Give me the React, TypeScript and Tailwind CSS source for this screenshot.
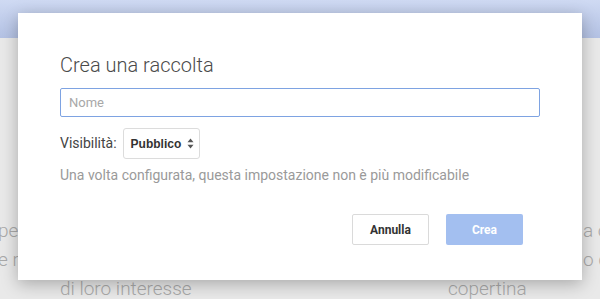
import React from "react";

export default function App() {
  return (
    <div
      className="relative w-[600px] h-[299px] overflow-hidden bg-[#e9e9e9]"
      style={{ fontFamily: "Roboto, 'Liberation Sans', sans-serif" }}
    >
      {/* page behind */}
      <div className="h-[38px] bg-gradient-to-b from-[#cfdaf3] to-[#b4c2e4]" />
      <div className="flex pt-[178px] text-[19px] leading-[29px] font-light text-[#a9a9a9] whitespace-nowrap">
        <div className="w-[448px] shrink-0 flex flex-col">
          <div className="-ml-[2px]">per condividere</div>
          <div className="-ml-[2px]">e raccolte</div>
          <div className="ml-[60px]">di loro interesse</div>
        </div>
        <div className="shrink-0 flex flex-col">
          <div className="ml-[135px]">a copertina</div>
          <div className="ml-[135px]">o di</div>
          <div>copertina</div>
        </div>
      </div>

      {/* dialog */}
      <div className="absolute left-[18px] top-[13px] w-[564px] h-[267px] bg-white shadow-[0_4px_16px_rgba(0,0,0,0.28)] px-[42px] pt-[38px]">
        <div className="text-[20px] leading-[28px] font-light text-[#4a4a4a]">Crea una raccolta</div>
        <div className="mt-[9px] h-[29px] w-[480px] border border-[#7ea3e2] rounded-[2px] flex items-center pl-[8px] text-[13px] text-[#a8a8a8]">
          Nome
        </div>
        <div className="mt-[11px] flex items-center">
          <span className="text-[14px] text-[#444]">Visibilità:</span>
          <div className="ml-[6px] h-[31px] w-[77px] border border-[#dcdcdc] rounded-[3px] flex items-center pl-[7px] gap-[6px]">
            <span className="text-[12px] font-bold text-[#333]" style={{ fontFamily: "'Liberation Sans', Arial, sans-serif" }}>Pubblico</span>
            <svg width="7" height="11" viewBox="0 0 7 11">
              <path d="M3.5 0.5 L6.5 4.2 L0.5 4.2 Z" fill="#555" />
              <path d="M3.5 10.5 L6.5 6.8 L0.5 6.8 Z" fill="#555" />
            </svg>
          </div>
        </div>
        <div className="mt-[6px] text-[14px] text-[#9a9a9a]">Una volta configurata, questa impostazione non è più modificabile</div>
        <div className="mt-[28px] flex justify-end gap-[17px] pr-[17px]">
          <div className="h-[31px] w-[77px] border border-[#dadada] rounded-[2px] flex items-center justify-center text-[12px] font-bold text-[#333]">
            Annulla
          </div>
          <div className="h-[31px] w-[77px] bg-[#a3bff0] rounded-[2px] flex items-center justify-center text-[12px] font-bold text-white">
            Crea
          </div>
        </div>
      </div>
    </div>
  );
}
